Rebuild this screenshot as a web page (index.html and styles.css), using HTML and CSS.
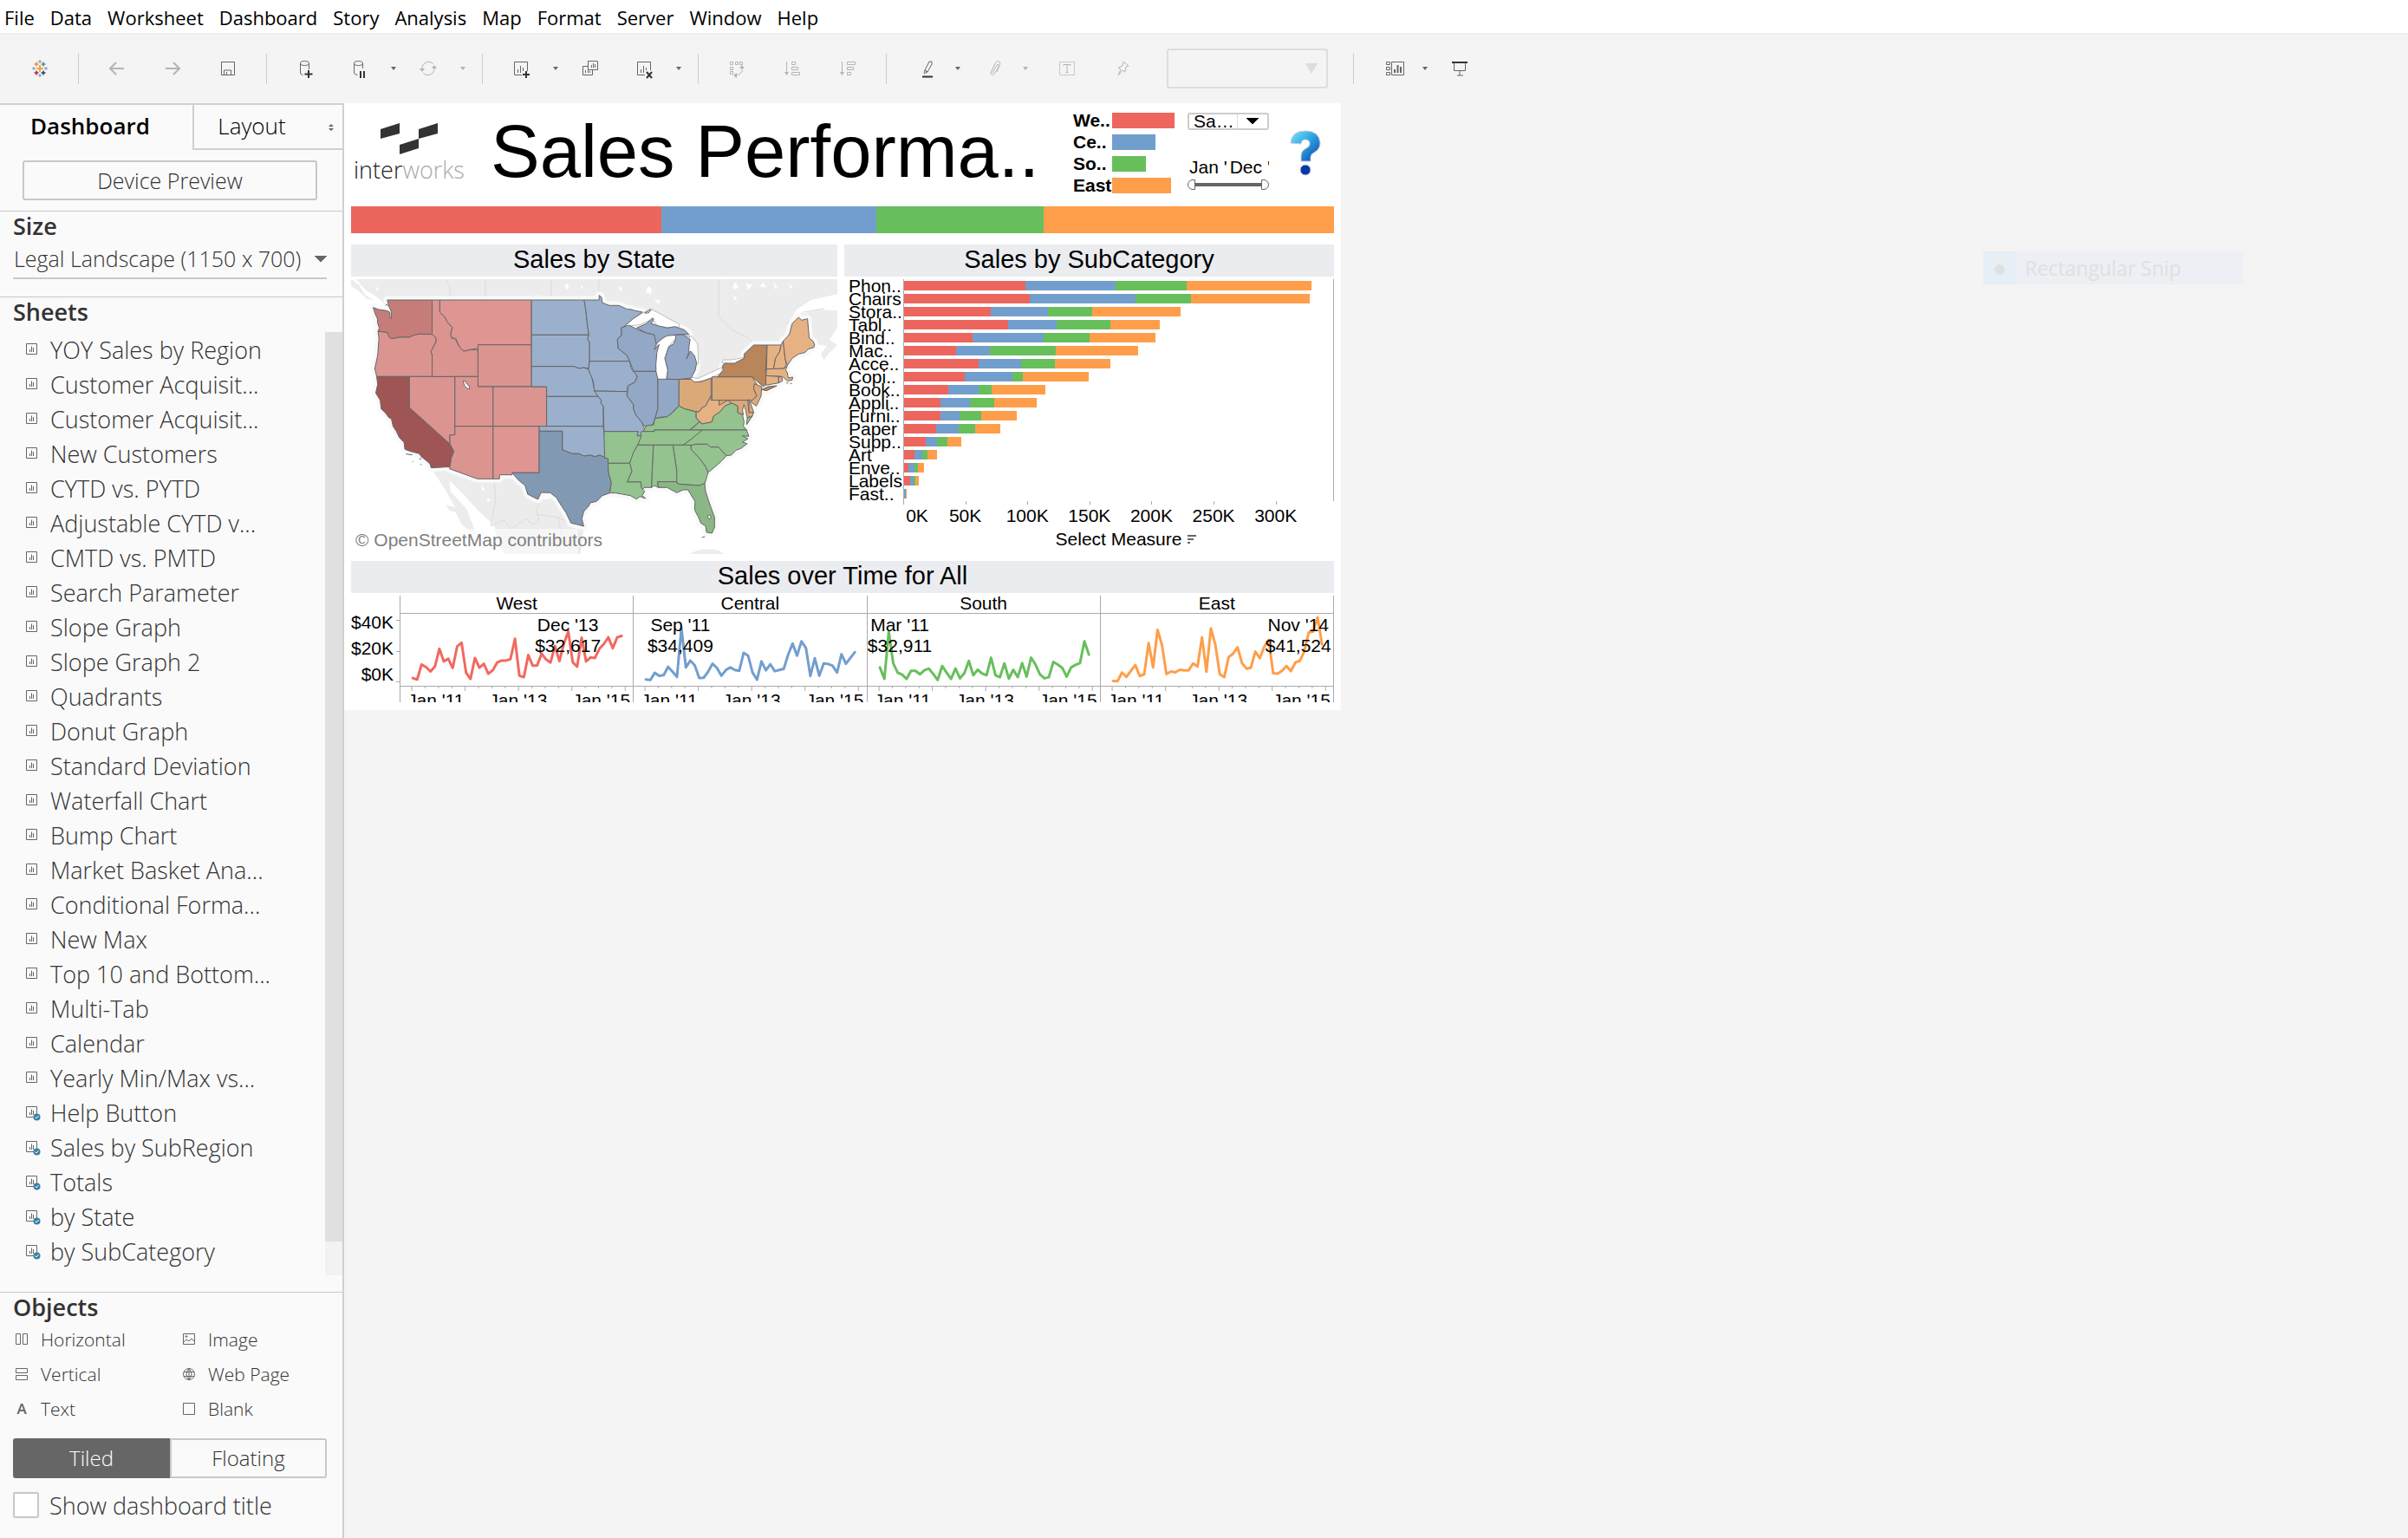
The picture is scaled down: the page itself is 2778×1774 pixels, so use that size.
FILE: index.html
```html
<!DOCTYPE html>
<html lang="en">

<head>
    <meta charset="UTF-8">
    <title>Sales Performance</title>
    <link rel="stylesheet" href="styles.css">
</head>

<body>
    <nav class="menubar">
        <button>File</button>
        <button>Data</button>
        <button>Worksheet</button>
        <button>Dashboard</button>
        <button>Story</button>
        <button>Analysis</button>
        <button>Map</button>
        <button>Format</button>
        <button>Server</button>
        <button>Window</button>
        <button>Help</button>
    </nav>

    <div class="toolbar">
        <div class="tools">
            <button class="tool" aria-label="Start page"><svg viewBox="0 0 24 24">
                    <g fill="none" stroke-width="1.6">
                        <path stroke="#eb912c" d="M12 8v8M8 12h8" />
                        <path stroke="#eb912c" d="M8 4.500v5M5.500 7h5" />
                        <path stroke="#59879b" d="M16 4.500v5M13.500 7h5" />
                        <path stroke="#c72035" d="M8 14.500v5M5.500 17h5" />
                        <path stroke="#1f447e" d="M16 14.500v5M13.500 17h5" />
                        <path stroke="#7199a6" stroke-width="1" d="M12 2v4M10 4h4M12 18v4M10 20h4M5 10v4M3 12h4M19 10v4M17 12h4" />
                    </g>
                </svg></button>
        </div>
        <span class="sep"></span>
        <div class="tools wide">
            <button class="tool off" aria-label="Undo"><svg viewBox="0 0 24 24"><path stroke-width="2" d="M20 12H5M11 5l-7 7 7 7" /></svg></button>
            <button class="tool off" aria-label="Redo"><svg viewBox="0 0 24 24"><path stroke-width="2" d="M4 12h15M13 5l7 7-7 7" /></svg></button>
            <button class="tool" aria-label="Save"><svg viewBox="0 0 24 24"><path d="M4.500 4.500h15v15h-15zM7.500 19v-5h8v5M10.500 19v-3" /></svg></button>
        </div>
        <span class="sep"></span>
        <div class="tools">
            <button class="tool" aria-label="New data source"><svg viewBox="0 0 24 24"><path d="M6.500 6v11q0 2 3 2.500M16.500 6v7M6.500 6q0-2.500 5-2.500t5 2.500-5 2.500-5-2.500" /><path class="bold" d="M16 14v9M11.500 18.500h9" /></svg></button>
            <button class="tool" aria-label="Pause updates"><svg viewBox="0 0 24 24"><path d="M6.500 6v11q0 2 4 2.500M16.500 6v6M6.500 6q0-2.500 5-2.500t5 2.500-5 2.500-5-2.500" /><path class="bold" d="M14 15v8M18 15v8" /></svg></button>
            <button class="caret" aria-label="Update options"></button>
            <button class="tool off" aria-label="Refresh"><svg viewBox="0 0 24 24"><path d="M5 13a7.500 7.500 0 0 1 13-6M19 11a7.500 7.500 0 0 1-13 6" /><path class="solid" d="M2 12h6l-3 4zM16 12h6l-3-4z" /></svg></button>
            <button class="caret off" aria-label="Refresh options"></button>
        </div>
        <span class="sep"></span>
        <div class="tools">
            <button class="tool" aria-label="New worksheet"><svg viewBox="0 0 24 24"><path d="M13 19.500H4.500v-15h15V15M8.500 17v-4M11.500 17V9M14.500 15v-4" /><path class="bold" d="M18 15v8M14 19h8" /></svg></button>
            <button class="caret" aria-label="New worksheet options"></button>
            <button class="tool" aria-label="Duplicate"><svg viewBox="0 0 24 24"><path d="M9.500 3.500h11v10h-11zM9 9.500H3.500v10h11V14M6.500 17v-3M9.500 17v-3M11.500 17v-2M13.500 11V8M15.500 11V6M17.500 11V7" /></svg></button>
            <button class="tool" aria-label="Clear sheet"><svg viewBox="0 0 24 24"><path d="M13 19.500H4.500v-15h15V14M8.500 17v-4M11.500 17V9M14.500 14v-3" /><path class="bold" d="M15 16l6 7M21 16l-6 7" /></svg></button>
            <button class="caret" aria-label="Clear options"></button>
        </div>
        <span class="sep"></span>
        <div class="tools wide">
            <button class="tool off" aria-label="Swap rows and columns"><svg viewBox="0 0 24 24"><path d="M4.500 4.500h3v3h-3zM10.500 4.500h3v3h-3zM15.500 4.500h3v3h-3zM4.500 10.500h3v3h-3zM4.500 15.500h3v3h-3zM18 11q2 7-7 9" /><path class="solid" d="M15 12l3-4 3 4zM12 17l-4 3 4 3z" /></svg></button>
            <button class="tool off" aria-label="Sort ascending"><svg viewBox="0 0 24 24"><path d="M5.500 4v14M11.500 4.500h4v3h-4zM11.500 10.500h7v3h-7zM11.500 16.500h9v3h-9z" /><path class="solid" d="M3 16h5l-2.500 4z" /></svg></button>
            <button class="tool off" aria-label="Sort descending"><svg viewBox="0 0 24 24"><path d="M5.500 4v14M11.500 4.500h9v3h-9zM11.500 10.500h7v3h-7zM11.500 16.500h4v3h-4z" /><path class="solid" d="M3 16h5l-2.500 4z" /></svg></button>
        </div>
        <span class="sep"></span>
        <div class="tools">
            <button class="tool slim" aria-label="Highlight"><svg viewBox="0 0 24 24"><path d="M9 14l5-10h3v3l-5 9zM8 17l1-3 3 2-4 2" /><path class="bold" d="M6 21.500h12" /></svg></button>
            <button class="caret" aria-label="Highlight options"></button>
            <button class="tool slim off" aria-label="Group"><svg viewBox="0 0 24 24"><path d="M9 17l5-9q1-2 2 0t-5 10q-3 3-4-1l5-11q4-5 6 0l-4 10" /></svg></button>
            <button class="caret off" aria-label="Group options"></button>
        </div>
        <div class="tools wide marks">
            <button class="tool off" aria-label="Show labels"><svg viewBox="0 0 24 24"><path stroke-dasharray="2 1" d="M3.500 4.500h17v15h-17z" /><path d="M8 9V7.500h8V9M12 8v9M10.500 16.500h3" /></svg></button>
            <button class="tool off" aria-label="Pin"><svg viewBox="0 0 24 24"><path d="M13 4l6 5-3 1-1 6-3-2-5 6 3-7-3-2 5-2z" /></svg></button>
        </div>
        <select class="fit" aria-label="Fit" disabled></select>
        <span class="sep"></span>
        <div class="tools">
            <button class="tool slim" aria-label="Cards"><svg viewBox="0 0 24 24"><path d="M2.500 4.500h4v3h-4zM2.500 10.500h4v3h-4zM2.500 16.500h4v3h-4zM8.500 4.500h14v15h-14z" /><path stroke-width="2" d="M12 17v-4M15.500 17V8M19 17v-7" /></svg></button>
            <button class="caret" aria-label="Card options"></button>
            <button class="tool" aria-label="Presentation mode"><svg viewBox="0 0 24 24"><path d="M5.500 6v8.500h13V6M12 15v5M9 20h7" /><path class="bold" d="M3 5h18" /></svg></button>
        </div>
    </div>

    <div class="workspace">
        <aside class="sidebar">
            <div class="tabs">
                <button class="tab active">Dashboard</button>
                <button class="tab">Layout
                    <svg class="updown" viewBox="0 0 6 8"><path d="M0 3l3-3 3 3zM0 5h6l-3 3z" /></svg>
                </button>
            </div>
            <button class="preview">Device Preview</button>

            <section class="size">
                <h2><label for="size">Size</label></h2>
                <select id="size">
                    <option>Legal Landscape (1150 x 700)</option>
                </select>
            </section>

            <section class="sheets">
                <h2>Sheets</h2>
                <div class="sheet-scroll">
                    <ul id="sheetList"></ul>
                    <div class="track"></div>
                </div>
            </section>

            <section class="objects">
                <h2>Objects</h2>
                <div class="object-grid">
                    <button><svg viewBox="0 0 14 14"><path d="M.5.5h5v12h-5zM8.500.5h5v12h-5z" /></svg>Horizontal</button>
                    <button><svg viewBox="0 0 14 14"><path d="M.5.500h13v12H.5zM1 10l3-3 3 2 3-3 3 3M3 3h2v1H3z" /></svg>Image</button>
                    <button><svg viewBox="0 0 14 14"><path d="M.5.500h13v5H.5zM.5 8.500h13v5H.5z" /></svg>Vertical</button>
                    <button><svg viewBox="0 0 14 14"><circle cx="7" cy="7" r="6.500" /><path d="M7 .5v13M1 4.500h12M1 9.500h12M7 .5q-6 6.500 0 13M7 .5q6 6.500 0 13" /></svg>Web Page</button>
                    <button><b>A</b>Text</button>
                    <button><svg viewBox="0 0 14 14"><path d="M.5.5h13v13H.5z" /></svg>Blank</button>
                </div>
                <div class="switch">
                    <button class="on">Tiled</button>
                    <button>Floating</button>
                </div>
                <label class="show-title"><input type="checkbox">Show dashboard title</label>
            </section>
        </aside>

        <main class="canvas">
            <div class="dashboard">
                <header class="top">
                    <div class="logo">
                        <svg viewBox="0 0 66 36"><path d="M0 7L22 0v12L0 18zM44 7L66 0v12l-22 6zM22 25l22-7v11l-22 7z" /></svg>
                        <p>inter<span>works</span></p>
                    </div>
                    <h1>Sales Performa..</h1>
                    <ul class="legend">
                        <li><span>We..</span><i class="west" style="width:72px"></i></li>
                        <li><span>Ce..</span><i class="central" style="width:50px"></i></li>
                        <li><span>So..</span><i class="south" style="width:39px"></i></li>
                        <li><span>East</span><i class="east" style="width:68px"></i></li>
                    </ul>
                    <div class="filters">
                        <select class="measure" aria-label="Select Measure">
                            <option>Sa…</option>
                        </select>
                        <div class="dates"><span>Jan '</span><span>Dec '</span></div>
                        <div class="range">
                            <input class="from" type="range" value="0" aria-label="Start date">
                            <input class="to" type="range" value="100" aria-label="End date">
                        </div>
                    </div>
                    <button class="help" aria-label="Help">
                        <svg viewBox="0 0 36 54">
                            <defs>
                                <linearGradient id="q" x1="0" y1="0" x2="1" y2="1">
                                    <stop offset="0" stop-color="#7fe3fa" />
                                    <stop offset=".4" stop-color="#35aee6" />
                                    <stop offset="1" stop-color="#0a3fae" />
                                </linearGradient>
                            </defs>
                            <path fill="url(#q)" stroke="#c3ccd4" d="M1 15Q2 1 18 1t17 14q0 7-7 11-4 2-4 5v5H13v-6q0-6 6-9 4-2 4-5 0-5-5-5t-5 5z" />
                            <circle cx="18" cy="46" r="6" fill="#0a38a8" stroke="#c3ccd4" />
                        </svg>
                    </button>
                </header>

                <div class="totals">
                    <i class="west" style="flex-grow:358"></i>
                    <i class="central" style="flex-grow:248"></i>
                    <i class="south" style="flex-grow:193"></i>
                    <i class="east" style="flex-grow:335"></i>
                </div>

                <div class="row">
                    <section class="by-state">
                        <h3>Sales by State</h3>
                        <div class="map">
                            <svg viewBox="24 36 1517 951" preserveAspectRatio="none">
                                <g class="land">
                                    <path d="M40 36L70 75 95 90 120 112 137 150 1060 400 1180 350 1300 400 1370 250 1388 190 1415 140 1460 108 1541 88V36z" />
                                    <path d="M24 36l25 20 20 35 25 18-20-5-25-25-25-20z" />
                                    <path d="M1425 160l50-20 66 5v60l-25 40 25 20-20 20-22 30-10-20 20-28-39-5-20-35z" />
                                    <path d="M274 690l57 2 87 35 109-14 40 47 40 40 58-8 30 58 55 45-10 92H500l-22-60-8-40-50-50-40-50-50-55 5 40 50 60 20 60 10 30-45-35-20-45-20-5-10-20 28 8-30-60z" />
                                    <path d="M1080 987q40-25 90-12l20 12z" />
                                </g>
                                <path class="borders" d="M320 36l12 30v42M443 36v72M648 36v72M797 36v56M1171 36v130l40 45 55 30 15 23M1380 190l55-40 65-12M470 730l5 70-15 90 40-20 25 30 45-35 20 20 20-10-8-45 12-30M600 850l70 10 10 60M665 860l35 15" />
                                <path class="ponds" d="M690 60l8-10 6 12-8 12zM740 55l8 8-4 10zM950 60l12 10-2 18-16-6zM1215 60l8-14 10 20-14 6zM1255 50l22 5-14 18zM1300 60l10-14 8 20zM1215 90l14 12-8 8zM100 60l10 10-5 8zM1340 45l14 18-6 9zM860 60l10 8-8 12zM970 105l20 6-8 10zM430 745l14 25-12-6zM450 790l10 15-12-2zM600 90l8 4-6 6zM1390 50l12 14-9 4z" />
                                <use href="#states" class="halo" />
                                <path class="lakes" d="M875 200l30-28 53-34 90 54-3 15-65-8-15-25-40 20zM1010 228l-30 30-8 30 5 95 28 1 7-34-9-40 12-40 30-42 40 5 20 25 3 70-10 5-17-48-20 15 20-65zM1080 385l5-10 20 5 78-40-5 20-31 18-52 17zM1180 325l5-10h25l40-8v-14l6 14-36 24z" />
                                <use href="#states" class="outline" />
                                <defs>
                                    <g id="states">
                                        <g fill="#db9490">
                                            <path fill="#c67d7a" d="M137 108H277V227L235 226 218 231 205 237 175 237 150 242 142 235 137 221 115 217 108 217 112 205 107 188 106 172 100 158 93 134 110 141 135 145 145 150 146 172 150 172 150 150 142 130z" />
                                            <path d="M115 217L137 221 142 235 150 242 175 237 205 237 218 231 235 226 277 227 290 240 288 255 273 287 277 297V373H104L98 345 107 300 111 240 108 217z" />
                                            <path fill="#9f5553" d="M104 373H206V480L333 607 345 632 335 655 337 685 274 689 270 675 262 667 243 650 237 640 210 632 192 625 189 600 175 585 165 562 155 545 150 520 142 515 130 497 118 485 115 455 101 430 107 400z" />
                                            <path d="M206 373H348V575L332 575 333 607 206 480z" />
                                            <path d="M277 108H301V150L315 165 325 185 340 203 335 225 338 240 350 245 362 270 375 285 395 280 415 280 420 284V373H277V297L273 287 288 255 290 240 277 227z" />
                                            <path fill="#df9592" d="M301 108H587V263H420V284L415 276 395 280 375 285 362 270 350 240 338 240 335 225 340 203 325 185 315 165 301 150z" />
                                            <path d="M420 263H587V408H420z" />
                                            <path d="M348 373H420V408H467V545H348z" />
                                            <path d="M467 408H634V545H467z" />
                                            <path d="M348 545H467V727H418L331 692 337 655 345 632 333 607 332 575 348 575z" />
                                            <path fill="#df9592" d="M467 545H611V706H527V713H487V727H467z" />
                                        </g>
                                        <g fill="#9bb0cc">
                                            <path d="M587 108H751L755 130 757 150 762 200 766 229H587z" />
                                            <path d="M587 229H766L762 243 768 255V320L765 345 750 342 735 345 720 338H587z" />
                                            <path d="M587 338H720L735 345 750 342 765 348 775 375 783 415 795 442H634V408H587z" />
                                            <path d="M634 442H795L805 455 803 465 811 475V545H634z" />
                                            <path d="M611 545H811L815 590V655L800 645 785 650 770 645 750 648 735 640 715 640 683 627V562H611z" />
                                            <path fill="#8299b3" d="M611 562H683V627L715 640 735 640 750 648 770 645 785 650 800 645 826 657 827 705 836 740 831 776 808 785 790 805 770 810 765 822 750 840 744 865 750 891 730 885 710 880 695 845 680 820 665 792 645 775 617 774 607 798 575 780 567 750 545 730 527 706H611z" />
                                            <path d="M751 108H798V92L805 98 808 118 830 127 860 127 885 140 895 140 910 145 933 150 905 172 875 200 867 205 868 228 855 245 857 275 885 300 893 320H768V255L762 243 766 229 762 200 757 150z" />
                                            <path d="M768 320H893L898 345 917 372 910 392 888 405 885 425 783 423 780 390 765 350z" />
                                            <path d="M783 423L885 425 885 440 905 470 905 485 912 505 930 530 940 555 930 578 916 578 920 563H813L811 475 803 465 805 455 795 442z" />
                                            <g fill="#93a8c6">
                                                <path d="M867 205L890 195 905 203 920 212 945 222 970 228 975 240 978 255 970 280 985 262 978 290 975 330V355H905L893 320 885 300 857 275 855 245 868 228z" />
                                                <path d="M905 355H975L981 380V485L972 520 965 540 940 545 930 530 912 505 905 485 905 470 885 440 888 405 910 392 917 372z" />
                                                <path d="M981 382H1047V475L1035 485 1025 500 1010 512 990 514 972 518 981 485z" />
                                                <path d="M1010 382L1047 383 1085 378 1098 350 1102 325 1095 300 1083 285 1070 312 1078 290 1078 270 1082 245 1060 228 1035 228 1038 240 1030 260 1015 270 1003 310 1012 350z" />
                                                <path d="M915 205L945 190 965 170 968 175 960 190 985 198 1010 205 1035 200 1065 212 1078 227 1050 227 1010 232 995 240 985 250 975 258 970 228 945 222z" />
                                            </g>
                                        </g>
                                        <g fill="#dba878">
                                            <path d="M1047 383L1085 382 1095 392 1120 390 1147 378V440L1130 475 1120 480 1110 495 1100 495 1085 490 1065 485 1047 475z" />
                                            <path d="M1150 374H1275L1290 400 1280 415 1290 440 1275 455H1150z" />
                                            <path fill="#b9855a" d="M1167 374L1185 352 1183 335 1190 327 1220 327 1250 310 1252 293 1280 264H1322L1318 345V400L1310 408 1275 374z" />
                                            <path fill="#b9855a" d="M1305 418L1325 408 1352 405 1320 422z" />
                                            <path d="M1282 398L1305 408 1303 440 1295 460 1288 475 1270 460 1290 440 1280 415z" />
                                            <path d="M1265 452L1270 465 1275 480 1280 497H1265z" />
                                            <path d="M1172 455H1262L1265 497H1280L1275 512 1260 515 1255 490 1250 470 1245 490 1248 505 1230 498 1230 475 1210 465 1200 455 1185 468 1172 472z" />
                                        </g>
                                        <g fill="#e6b284">
                                            <path d="M1322 264H1365L1362 285 1348 310 1342 347H1320z" />
                                            <path d="M1365 264L1372 250 1378 310 1382 330 1375 345 1342 347 1348 310 1362 285z" />
                                            <path d="M1372 250L1385 235 1392 225 1400 190 1420 168 1430 178 1448 173 1453 240 1465 250 1470 262 1468 272 1450 278 1440 290 1420 295 1400 310 1385 335 1378 310z" />
                                            <path d="M1320 347L1375 345 1385 335 1380 350 1385 360 1388 378 1402 375 1400 385 1385 388 1370 373 1318 370z" />
                                            <path d="M1318 370L1358 373V395L1318 403z" />
                                            <path d="M1358 373L1368 375 1370 388 1358 395z" />
                                            <path d="M1147 440V455H1172V472L1200 455 1210 465 1190 475 1175 495 1155 510 1150 530 1120 537 1100 515 1100 495 1110 495 1120 480 1130 475z" />
                                        </g>
                                        <g fill="#94c38f">
                                            <path d="M1212 465L1230 475 1230 498 1245 505 1250 530 1248 545 1258 558H1080L1100 542 1110 530 1120 537 1150 530 1155 510 1175 495 1190 475z" />
                                            <path d="M1260 515L1274 512 1258 540z" />
                                            <path d="M935 563L945 543 968 540 972 518 1010 512 1025 500 1047 475 1065 485 1100 495 1100 515 1110 530 1080 558H970V563z" />
                                            <path d="M930 563H970V558H1120L1100 580 1085 590 1060 610H918z" />
                                            <path d="M1120 558H1258L1265 580 1245 578 1262 588 1245 600 1260 605 1240 622 1225 628 1210 645 1195 647 1170 617H1145L1135 607H1100L1083 612 1060 610 1085 590z" />
                                            <path d="M1083 612L1100 607H1135L1145 617H1170L1195 647 1180 665 1165 680 1138 705 1130 685 1110 655 1085 625z" />
                                            <path d="M1028 610H1083L1085 625 1110 655 1130 685 1138 705 1127 745 1110 750 1045 745 1038 735 1040 700z" />
                                            <path d="M967 610H1028L1040 700V737H980L983 757 970 750 961 757z" />
                                            <path d="M918 610H967L961 757 940 757 930 765 928 738H885L900 700 893 675 898 645z" />
                                            <path d="M813 563H920L916 578 930 578 918 610 905 635 893 673H826V657L815 655z" />
                                            <path d="M826 673H893L900 700 885 738H928L930 758 940 770 932 785 943 795 925 788 915 797 895 785 870 780 850 776 831 776 836 740 827 705z" />
                                            <path fill="#8ab785" d="M980 737H1038L1045 745 1110 750 1127 742 1130 770 1140 805 1158 860V895L1150 915 1133 912 1130 890 1115 880 1108 860 1096 835 1097 805 1075 765 1060 765 1040 775 1010 757 983 757z" />
                                        </g>
                                    </g>
                                </defs>
                                <path class="ponds edge" d="M373 388l8 2 5 10 6 4 2 12-8-2-8-10zM1136 856l7-4 5 10-8 4zM940 153l20-12-8 12z" />
                                <path class="dots" d="M195 641l20 3M215 667h3M240 675l4 4M237 658h6M1118 930l10-3M1382 395h6M1394 396l5 2M132 124l8 3" />
                            </svg>
                            <p>© OpenStreetMap contributors</p>
                        </div>
                    </section>

                    <section class="by-subcategory">
                        <h3>Sales by SubCategory</h3>
                        <div class="bars">
                            <div class="bar-labels" id="barLabels"></div>
                            <div class="bar-plot" id="barPlot"></div>
                        </div>
                        <div class="axis" id="barAxis"></div>
                        <p class="axis-title"><span>Select Measure<svg viewBox="0 0 10 10"><path d="M0 1h10M0 5h7M0 9h3" /></svg></span></p>
                    </section>
                </div>

                <section class="over-time">
                    <h3>Sales over Time for All</h3>
                    <div class="panes">
                        <div class="y-axis">
                            <span>$40K</span>
                            <span>$20K</span>
                            <span>$0K</span>
                        </div>
                        <div class="pane-row" id="panes"></div>
                    </div>
                </section>
            </div>

            <div class="snip"><span class="snip-dot"></span>Rectangular Snip</div>
        </main>
    </div>
    <script src="charts.js"></script>
</body>

</html>
```

FILE: styles.css
```css
* {
    box-sizing: border-box;
}

body {
    margin: 0;
    height: 100vh;
    display: flex;
    flex-direction: column;
    background: #f4f4f4;
    color: #333;
    font-family: 'Open Sans', 'Noto Sans', sans-serif;
    font-size: 22px;
    overflow: hidden;
}

h1,
h2,
h3,
p,
ul {
    margin: 0;
    padding: 0;
    list-style: none;
}

h1,
h3 {
    font-weight: normal;
}

button,
select,
input {
    font: inherit;
    color: inherit;
    margin: 0;
    padding: 0;
    border: none;
    background: none;
    border-radius: 0;
}

select {
    appearance: none;
}

.west {
    background: #ec665e;
    stroke: #f1695f;
}

.central {
    background: #729ece;
    stroke: #729ece;
}

.south {
    background: #67bf5c;
    stroke: #67bf5c;
}

.east {
    background: #ff9e4a;
    stroke: #ff9e4a;
}

/* menu and toolbar */
.menubar {
    display: flex;
    gap: 18px;
    height: 38px;
    padding: 5px 5px 0;
    background: #fff;
    color: #000;
}

.menubar button {
    height: 31px;
    line-height: 31px;
}

.toolbar {
    display: flex;
    align-items: center;
    height: 81px;
    padding-left: 15px;
    border-top: 1px solid #ebebeb;
}

.tools {
    display: flex;
    align-items: center;
}

.wide {
    gap: 2px;
}

.marks {
    margin-left: 8px;
}

.sep {
    width: 1px;
    height: 35px;
    margin: 0 13px;
    background: #ccc;
}

.tool {
    width: 62px;
    height: 40px;
    display: flex;
    align-items: center;
    justify-content: center;
}

.slim {
    width: 52px;
    margin-left: 8px;
}

.tool svg {
    width: 24px;
    height: 24px;
    fill: none;
    stroke: #666;
}

.tool .bold {
    stroke: #333;
    stroke-width: 2;
}

.tool .solid {
    fill: #b4b4b4;
    stroke: none;
}

.tool.off svg {
    stroke: #b4b4b4;
}

.caret {
    width: 18px;
    height: 40px;
    display: flex;
    align-items: center;
    justify-content: center;
}

.caret::after {
    content: '';
    border: 3px solid transparent;
    border-top: 4px solid #666;
    border-bottom: none;
}

.caret.off::after {
    border-top-color: #b4b4b4;
}

.fit {
    width: 186px;
    height: 46px;
    margin: 0 16px 0 20px;
    border: 2px solid #d4d4d4;
    border-radius: 3px;
    background-image: linear-gradient(to bottom left, #d4d4d4 50%, transparent 50%), linear-gradient(to bottom right, #d4d4d4 50%, transparent 50%);
    background-size: 7px 12px;
    background-position: right 17px center, right 10px center;
    background-repeat: no-repeat;
}

/* left panel */
.workspace {
    flex: 1;
    display: flex;
    min-height: 0;
}

.sidebar {
    width: 397px;
    display: flex;
    flex-direction: column;
    background: #fafafa;
    border-top: 2px solid #d0d0d0;
    border-right: 2px solid #d0d0d0;
    font-weight: 300;
}

.tabs {
    display: flex;
    height: 52px;
    color: #000;
    font-size: 26px;
}

.tab {
    flex: 1;
    position: relative;
    padding: 0 38px 2px 0;
    border-left: 2px solid #d0d0d0;
    border-bottom: 2px solid #d0d0d0;
}

.tab.active {
    flex: none;
    width: 222px;
    padding: 0 14px 4px 0;
    border: none;
    font-weight: 600;
}

.updown {
    position: absolute;
    right: 10px;
    top: 22px;
    width: 6px;
    height: 8px;
    fill: #5b6770;
}

.preview {
    height: 46px;
    margin: 12px 29px 12px 26px;
    border: 2px solid #c8c8c8;
    border-radius: 3px;
    font-size: 25px;
    line-height: 38px;
}

.sidebar section {
    border-top: 1px solid #c8c8c8;
}

.sidebar h2 {
    font-size: 27px;
    font-weight: 600;
    line-height: 34px;
    padding-left: 15px;
}

.size {
    height: 99px;
}

.size select {
    display: block;
    width: 362px;
    height: 44px;
    margin-left: 15px;
    padding: 0 0 2px 1px;
    font-size: 25px;
    border-bottom: 2px solid #c8c8c8;
    background-image: linear-gradient(to bottom left, #666 50%, transparent 50%), linear-gradient(to bottom right, #666 50%, transparent 50%);
    background-size: 7px 8px;
    background-position: right 7px center, right 0 center;
    background-repeat: no-repeat;
}

.sheets {
    flex: 1;
    display: flex;
    flex-direction: column;
    padding-bottom: 19px;
    min-height: 0;
}

.sheet-scroll {
    flex: 1;
    display: flex;
    justify-content: space-between;
    margin-top: 6px;
    min-height: 0;
}

.sheet-scroll li {
    display: flex;
    align-items: center;
    gap: 11px;
    height: 40px;
    padding-left: 30px;
    font-size: 27px;
    white-space: nowrap;
}

.sheet-scroll svg {
    width: 17px;
    height: 17px;
    margin-top: 2px;
    fill: none;
    stroke: #666;
}

.sheet-scroll circle {
    fill: #3a81a2;
    stroke: none;
}

.sheet-scroll .tick {
    stroke: #fff;
}

.track {
    width: 20px;
    background: #f2f2f2;
    padding-bottom: 39px;
}

.track::before {
    content: '';
    display: block;
    height: 100%;
    background: #e0e0e0;
}

.objects {
    padding: 0 18px 23px 0;
}

.object-grid {
    display: grid;
    grid-template-columns: 193px 1fr;
    padding-left: 18px;
}

.object-grid button {
    display: flex;
    align-items: center;
    gap: 15px;
    height: 40px;
    font-size: 21px;
}

.object-grid svg,
.object-grid b {
    width: 14px;
    height: 14px;
    fill: none;
    stroke: #666;
}

.object-grid b {
    color: #666;
    font-size: 17px;
    line-height: 14px;
    font-weight: 600;
}

.switch {
    display: flex;
    height: 46px;
    margin: 14px 0 16px 15px;
}

.switch button {
    flex: 1;
    border: 2px solid #c8c8c8;
    border-radius: 0 3px 3px 0;
    font-size: 24px;
    line-height: 38px;
}

.switch .on {
    border-color: #666;
    border-radius: 3px 0 0 3px;
    background: #666;
    color: #fff;
}

.show-title {
    display: flex;
    align-items: center;
    gap: 12px;
    height: 30px;
    margin-left: 15px;
    font-size: 27px;
}

.show-title input {
    appearance: none;
    width: 30px;
    height: 30px;
    background: #fff;
    border: 2px solid #c8c8c8;
    border-radius: 2px;
}

/* dashboard */
.canvas {
    flex: 1;
    position: relative;
    font-family: 'Liberation Sans', Arial, sans-serif;
    font-size: 21px;
    color: #000;
}

.dashboard {
    max-width: 1150px;
    padding: 8px 8px 9px;
    background: #fff;
}

.top {
    display: flex;
    height: 111px;
}

.logo {
    width: 161px;
    padding: 15px 0 0 3px;
    font-family: 'Open Sans', sans-serif;
}

.logo svg {
    display: block;
    width: 66px;
    height: 36px;
    margin-left: 31px;
    fill: #333;
}

.logo p {
    font-size: 27px;
    font-weight: 300;
    line-height: 36px;
    color: #222;
}

.logo span {
    color: #aaa;
}

h1 {
    flex: 1;
    font-size: 85px;
    line-height: 96px;
    white-space: nowrap;
}

.legend {
    display: flex;
    flex-direction: column;
    gap: 7px;
    width: 132px;
    padding-top: 3px;
    font-weight: bold;
}

.legend li {
    display: flex;
    height: 18px;
    line-height: 18px;
}

.legend span {
    width: 45px;
}

.filters {
    width: 94px;
    padding-top: 3px;
    overflow: hidden;
}

.measure {
    display: block;
    width: 94px;
    height: 20px;
    padding-left: 5px;
    line-height: 16px;
    border: 2px solid #ccc;
    border-radius: 3px;
    background-image: linear-gradient(to bottom left, #000 50%, transparent 50%), linear-gradient(to bottom right, #000 50%, transparent 50%), linear-gradient(#ddd, #ddd);
    background-size: 7px 8px, 7px 8px, 1px 16px;
    background-position: right 17px center, right 10px center, right 34px center;
    background-repeat: no-repeat;
}

.dates {
    display: flex;
    gap: 3px;
    margin-top: 31px;
    padding-left: 2px;
    line-height: 24px;
    white-space: nowrap;
}

.range {
    position: relative;
    height: 14px;
    margin-top: 1px;
    background: linear-gradient(#666, #666) no-repeat center / 80px 4px;
}

.range input {
    position: absolute;
    left: 0;
    top: 0;
    width: 100%;
    height: 14px;
    appearance: none;
}

.range input::-webkit-slider-thumb {
    appearance: none;
    width: 9px;
    height: 12px;
    background: #fff;
    border: 1px solid #666;
    border-radius: 6px 0 0 6px;
}

.range .to::-webkit-slider-thumb {
    border-radius: 0 6px 6px 0;
}

.help {
    width: 75px;
    padding: 23px 0 0 24px;
    align-self: flex-start;
}

.help svg {
    display: block;
    width: 36px;
    height: 54px;
}

.totals {
    display: flex;
    height: 31px;
}

h3 {
    height: 37px;
    margin: 0;
    background: #ebecf0;
    font-size: 29px;
    line-height: 34px;
    text-align: center;
}

.row {
    display: flex;
    gap: 8px;
    margin-top: 13px;
}

.by-state {
    width: 561px;
}

.map {
    position: relative;
    height: 317px;
    margin: 3px 0 8px;
}

.map svg {
    display: block;
    width: 100%;
    height: 100%;
    fill: none;
}

.map path {
    vector-effect: non-scaling-stroke;
}

.land {
    fill: #ececec;
}

.borders {
    stroke: #dcdcdc;
}

.ponds,
.lakes {
    fill: #fff;
}

.lakes {
    stroke: #bbb;
}

.halo {
    stroke: #f9f9f9;
    stroke-width: 9px;
    stroke-linejoin: round;
}

.outline,
.edge,
.dots {
    stroke: #666;
    stroke-width: 1px;
    stroke-linejoin: round;
}

.map p {
    position: absolute;
    left: 0;
    bottom: 0;
    width: 262px;
    height: 29px;
    padding-left: 5px;
    line-height: 26px;
    color: #808080;
    background: rgba(255, 255, 255, 0.5);
    white-space: nowrap;
}

.by-subcategory {
    flex: 1;
}

.bars {
    display: flex;
    height: 256px;
    margin-top: 3px;
}

.bar-labels {
    width: 68px;
    padding-left: 5px;
}

.bar-labels div {
    height: 15px;
    line-height: 15px;
    white-space: nowrap;
}

.bar-plot {
    flex: 1;
    border-left: 1px solid #aaa;
    border-right: 1px solid #aaa;
}

.bar {
    display: flex;
    height: 15px;
    padding: 2px 0;
}

.axis {
    position: relative;
    height: 32px;
    margin-left: 68px;
}

.axis span {
    position: absolute;
    top: 0;
    padding-top: 5px;
    transform: translateX(-50%);
    line-height: 24px;
}

.axis span:first-child {
    padding-left: 32px;
}

.axis i {
    position: absolute;
    width: 1px;
    height: 4px;
    background: #aaa;
}

.axis-title {
    margin-left: 68px;
    line-height: 24px;
    text-align: center;
}

.axis-title span {
    position: relative;
}

.axis-title svg {
    position: absolute;
    right: -17px;
    top: 7px;
    width: 10px;
    height: 10px;
    stroke: #666;
    stroke-width: 2;
}

.panes {
    display: flex;
    height: 123px;
    margin-top: 3px;
    overflow: hidden;
}

.y-axis {
    width: 56px;
    padding: 19px 7px 0 0;
    text-align: right;
    background: linear-gradient(#aaa, #aaa) no-repeat right 0 top 28px / 4px 1px,
        linear-gradient(#aaa, #aaa) no-repeat right 0 top 64px / 4px 1px,
        linear-gradient(#aaa, #aaa) no-repeat right 0 top 99px / 4px 1px;
    line-height: 24px;
}

.y-axis span {
    display: block;
    margin-bottom: 6px;
}

.pane-row {
    flex: 1;
    display: flex;
    border-right: 1px solid #aaa;
}

.pane {
    flex: 1;
    position: relative;
    border-left: 1px solid #aaa;
}

.pane h4 {
    margin: 0;
    height: 21px;
    font-size: 21px;
    font-weight: normal;
    line-height: 18px;
    text-align: center;
    border-bottom: 1px solid #aaa;
}

.pane svg {
    display: block;
    width: 100%;
    height: 83px;
    fill: none;
    stroke-linejoin: round;
    stroke-linecap: round;
}

.pane .line {
    background: none;
    stroke-width: 3px;
}

.pane .ticks {
    height: 6px;
    border-top: 1px solid #aaa;
    stroke: #aaa;
    stroke-linecap: butt;
}

.pane path,
.pane polyline {
    vector-effect: non-scaling-stroke;
}

.pane .peak {
    position: absolute;
    top: 22px;
    transform: translateX(-50%);
    line-height: 24px;
    text-align: center;
}

.months {
    display: flex;
    justify-content: space-between;
    padding: 0 3px 0 8px;
    line-height: 22px;
}

.snip {
    position: absolute;
    right: 190px;
    top: 171px;
    width: 300px;
    height: 38px;
    display: flex;
    align-items: center;
    gap: 10px;
    background: #eceff4;
    color: #e0e0e0;
    font-family: 'Open Sans', sans-serif;
    font-size: 23px;
}

.snip-dot {
    width: 38px;
    height: 38px;
    background: radial-gradient(circle at 19px 21px, #e0e0e0 6px, #e6eef6 6px);
}
```

FILE: charts.js
```js
const sheets = [
    'YOY Sales by Region', 'Customer Acquisit...', 'Customer Acquisit...', 'New Customers', 'CYTD vs. PYTD',
    'Adjustable CYTD v...', 'CMTD vs. PMTD', 'Search Parameter', 'Slope Graph', 'Slope Graph 2', 'Quadrants',
    'Donut Graph', 'Standard Deviation', 'Waterfall Chart', 'Bump Chart', 'Market Basket Ana...',
    'Conditional Forma...', 'New Max', 'Top 10 and Bottom...', 'Multi-Tab', 'Calendar', 'Yearly Min/Max vs...',
    'Help Button', 'Sales by SubRegion', 'Totals', 'by State', 'by SubCategory'
];
// the last five sheets are used on the dashboard
const firstUsed = 22;

document.getElementById('sheetList').innerHTML = sheets.map((name, i) => `
    <li><svg viewBox="0 0 17 17"><path d="M.5.5h12v12H.5zM4.500 10V7M6.500 10V3.500M8.500 10V5" />${
    i >= firstUsed ? '<circle cx="12.500" cy="12.500" r="4" /><path class="tick" d="M10.500 12.500l1.500 1.500 2.500-3" />' : ''
}</svg>${name}</li>`).join('');

const regions = ['west', 'central', 'south', 'east'];

// sales in thousands: west, central, south, east
const subCategories = [
    ['Phon..', 98.2, 73.1, 57.5, 100.9],
    ['Chairs', 101.7, 85.4, 44.7, 96.6],
    ['Stora..', 70.1, 46.6, 35.3, 71.5],
    ['Tabl..', 84.3, 39.3, 43.6, 39.3],
    ['Bind..', 55.4, 57.5, 36.9, 53.3],
    ['Mac..', 42.3, 26.8, 53.5, 66.6],
    ['Acce..', 60.2, 34.5, 27.3, 45.2],
    ['Copi..', 49.3, 38, 8.8, 53.3],
    ['Book..', 35.9, 24.1, 11, 43.4],
    ['Appli..', 29.7, 23.8, 19.5, 34.3],
    ['Furni..', 29.7, 15.3, 17.4, 28.9],
    ['Paper', 26, 17.9, 13.7, 20.3],
    ['Supp..', 17.7, 9.1, 8.6, 11],
    ['Art', 8.6, 5.9, 4.6, 7.8],
    ['Enve..', 3.7, 4.8, 2.9, 4.8],
    ['Labels', 4.8, 2.7, 1.9, 2.7],
    ['Fast..', 0.3, 0.8, 0.5, 0.8]
];
const axisMax = 347;

document.getElementById('barLabels').innerHTML = subCategories.map(row => `<div>${row[0]}</div>`).join('');
document.getElementById('barPlot').innerHTML = subCategories.map(row => `<div class="bar">${
    regions.map((r, i) => `<i class="${r}" style="width:${row[i + 1] / axisMax * 100}%"></i>`).join('')
}</div>`).join('');

const steps = [0, 50, 100, 150, 200, 250, 300];
document.getElementById('barAxis').innerHTML =
    steps.map(k => `<span style="left:${k / axisMax * 100}%">${k}K</span>`).join('') +
    steps.map(k => `<i style="left:${k / axisMax * 100}%"></i>`).join('');

// one point a month, drawn downwards: 439 is $0, 226 is $40K
const series = [
    {
        name: 'West', peak: "Dec '13<br>$32,617", at: 72,
        y: [427, 432, 380, 389, 404, 387, 325, 369, 360, 392, 317, 304, 408, 430, 357, 391, 377, 412, 400, 373, 366, 366, 361, 290,
            419, 424, 347, 384, 383, 342, 362, 373, 315, 368, 307, 265, 372, 387, 286, 369, 355, 357, 325, 308, 285, 323, 285, 280]
    },
    {
        name: 'Central', peak: "Sep '11<br>$34,409", at: 20,
        y: [432, 434, 409, 419, 417, 388, 405, 423, 253, 390, 366, 383, 427, 426, 405, 377, 392, 419, 399, 390, 399, 402, 339, 349,
            408, 433, 369, 400, 379, 403, 399, 395, 346, 307, 349, 299, 322, 420, 358, 419, 376, 378, 384, 408, 344, 377, 357, 337]
    },
    {
        name: 'South', peak: "Mar '11<br>$32,911", at: 14,
        y: [390, 430, 265, 376, 408, 415, 430, 402, 402, 414, 400, 394, 413, 434, 385, 408, 430, 394, 428, 410, 367, 417, 398, 411,
            417, 356, 417, 424, 376, 429, 398, 424, 375, 422, 356, 380, 414, 428, 424, 371, 380, 391, 422, 390, 381, 375, 299, 345]
    },
    {
        name: 'East', peak: "Nov '14<br>$41,524", at: 85,
        y: [437, 438, 408, 423, 402, 382, 420, 414, 305, 390, 259, 312, 413, 404, 407, 398, 400, 400, 376, 387, 285, 405, 254, 310,
            414, 424, 354, 342, 320, 375, 394, 391, 335, 358, 318, 293, 410, 412, 402, 385, 403, 373, 367, 335, 268, 265, 215, 310]
    }
];

let ticks = '';
for (let m = 0; m <= 48; m += 3) {
    ticks += `M${m - 0.2} 0v${m % 12 ? 2 : 5}`;
}

document.getElementById('panes').innerHTML = series.map((s, i) => `
    <div class="pane">
        <h4>${s.name}</h4>
        <svg class="line ${regions[i]}" viewBox="-2.75 203 52.3 251" preserveAspectRatio="none">
            <polyline points="${s.y.map((y, x) => x + ',' + y).join(' ')}" />
        </svg>
        <svg class="ticks" viewBox="-2.75 0 52.3 5" preserveAspectRatio="none"><path d="${ticks}" /></svg>
        <div class="peak" style="left:${s.at}%">${s.peak}</div>
        <div class="months"><span>Jan '11</span><span>Jan '13</span><span>Jan '15</span></div>
    </div>`).join('');
```
